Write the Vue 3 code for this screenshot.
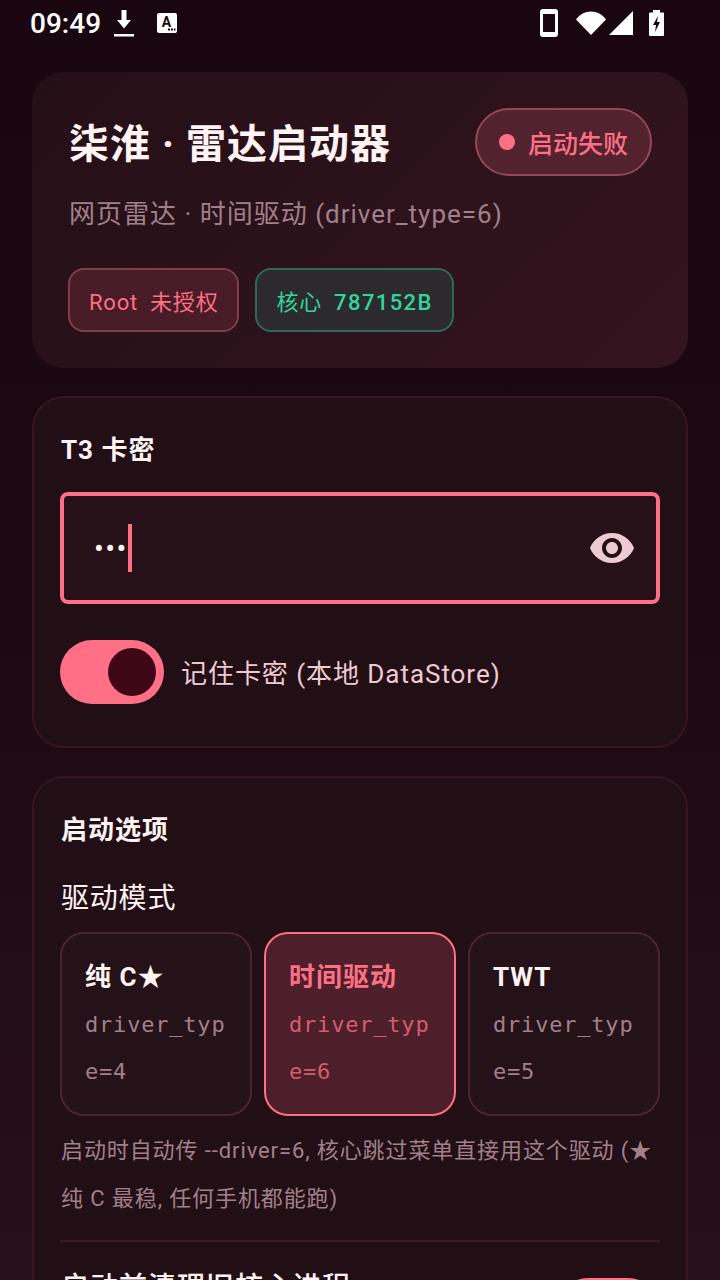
<script setup>
const drivers = [
  { name: '纯 C★', code: 'driver_type=4', active: false },
  { name: '时间驱动', code: 'driver_type=6', active: true },
  { name: 'TWT', code: 'driver_type=5', active: false },
]
</script>

<template>
  <div class="screen">
    <div class="status-bar">
      <span class="clock">09:49</span>
      <svg class="ic-download" width="22" height="28" viewBox="0 0 22 28">
        <path d="M8.500 1h5v10h4.500L11 19.500 4 11h4.500z" fill="#fff" />
        <rect x="1" y="25" width="20" height="2.500" fill="#fff" />
      </svg>
      <svg class="ic-sim" width="20" height="20" viewBox="0 0 20 20">
        <rect width="20" height="20" rx="2" fill="#fff" />
        <text x="9.500" y="13.500" text-anchor="middle" class="sim-letter">A</text>
        <rect x="11" y="15.500" width="2" height="2" fill="#1a0610" />
        <rect x="14" y="15.500" width="2" height="2" fill="#1a0610" />
        <rect x="17" y="15.500" width="1.500" height="2" fill="#1a0610" />
      </svg>
      <div class="status-right">
        <svg class="ic-phone" width="18" height="28" viewBox="0 0 18 28">
          <path fill-rule="evenodd" d="M3 0h12a3 3 0 0 1 3 3v22a3 3 0 0 1-3 3H3a3 3 0 0 1-3-3V3a3 3 0 0 1 3-3zM3 5v18h12V5z" fill="#fff" />
        </svg>
        <svg class="ic-wifi" width="30" height="24" viewBox="0 0 30 24">
          <path d="M0 8.500C3.800 3.200 9 .5 15 .5s11.200 2.700 15 8L15 24z" fill="#fff" />
        </svg>
        <svg class="ic-signal" width="24" height="24" viewBox="0 0 24 24">
          <path d="M24 0v24H0z" fill="#fff" />
        </svg>
        <svg class="ic-battery" width="15" height="26" viewBox="0 0 15 26">
          <path d="M4 0h7v2.500h3a1 1 0 0 1 1 1V25a1 1 0 0 1-1 1H1a1 1 0 0 1-1-1V3.500a1 1 0 0 1 1-1h3z" fill="#fff" />
          <path d="M9 6 4 15h3l-1 7 5-10H8z" fill="#1a0610" />
        </svg>
      </div>
    </div>

    <div class="content">
      <section class="hero">
        <div class="hero-top">
          <h1 class="hero-title">柒淮 · 雷达启动器</h1>
          <div class="state-badge">
            <span class="state-dot"></span>
            <span>启动失败</span>
          </div>
        </div>
        <p class="hero-sub">网页雷达 · 时间驱动 (driver_type=6)</p>
        <div class="chips">
          <div class="chip chip-red"><span>Root<span class="chip-val">未授权</span></span></div>
          <div class="chip chip-green"><span>核心<span class="chip-val chip-num">787152B</span></span></div>
        </div>
      </section>

      <section class="card card-key">
        <h2 class="card-title">T3 卡密</h2>
        <div class="key-input">
          <span class="dots">•••</span>
          <span class="caret"></span>
          <svg class="eye" width="48" height="48" viewBox="0 0 24 24">
            <path d="M12 4.500C7 4.500 2.730 7.610 1 12c1.730 4.390 6 7.500 11 7.500s9.270-3.110 11-7.500c-1.730-4.390-6-7.500-11-7.500zM12 17c-2.760 0-5-2.240-5-5s2.240-5 5-5 5 2.240 5 5-2.240 5-5 5zm0-8c-1.660 0-3 1.340-3 3s1.340 3 3 3 3-1.340 3-3-1.340-3-3-3z" fill="#eecbd2" />
          </svg>
        </div>
        <div class="remember">
          <div class="switch"><span class="thumb"></span></div>
          <span class="remember-label">记住卡密 (本地 DataStore)</span>
        </div>
      </section>

      <section class="card">
        <h2 class="card-title">启动选项</h2>
        <div class="mode-label">驱动模式</div>
        <div class="drivers">
          <div v-for="d in drivers" :key="d.code" class="driver" :class="{ active: d.active }">
            <div class="driver-name">{{ d.name }}</div>
            <div class="driver-code">{{ d.code }}</div>
          </div>
        </div>
        <p class="hint">启动时自动传 --driver=6, 核心跳过菜单直接用这个驱动 (★纯 C 最稳, 任何手机都能跑)</p>
        <div class="divider"></div>
        <div class="clean-row">
          <span class="clean-label">启动前清理旧核心进程</span>
          <div class="switch"><span class="thumb"></span></div>
        </div>
      </section>
    </div>
  </div>
</template>

<style>
html,
body {
  margin: 0;
  background: #1a0610;
}
</style>

<style scoped>
.screen {
  width: 720px;
  height: 1280px;
  overflow: hidden;
  background: linear-gradient(180deg, #19060f 0%, #1b0811 40%, #28101a 100%);
  font-family: Roboto, 'Noto Sans CJK SC', sans-serif;
  color: #fff3f4;
}

.status-bar {
  height: 48px;
  display: flex;
  align-items: center;
  padding: 0 56px 2px 30px;
  box-sizing: border-box;
}
.clock {
  font-size: 28px;
  font-weight: 500;
  color: #fff;
  width: 70px;
}
.ic-download {
  margin-left: 13px;
}
.ic-sim {
  margin-left: 22px;
}
.sim-letter {
  font-size: 14px;
  font-weight: 700;
  fill: #1a0610;
}
.status-right {
  margin-left: auto;
  display: flex;
  align-items: center;
}
.ic-wifi {
  margin-left: 18px;
}
.ic-signal {
  margin-left: 3px;
}
.ic-battery {
  margin-left: 16px;
}

.content {
  padding: 24px 32px 0;
  display: flex;
  flex-direction: column;
  gap: 28px;
}

.hero {
  padding: 36px;
  border-radius: 32px;
  background: linear-gradient(135deg, #250f16 0%, #33141f 100%);
}
.hero-top {
  display: flex;
  align-items: center;
  justify-content: space-between;
}
.hero-title {
  margin: 0;
  padding: 6px 0 0 1px;
  font-size: 40px;
  font-weight: 700;
  line-height: 62px;
  letter-spacing: 1px;
}
.state-badge {
  width: 177px;
  height: 68px;
  box-sizing: border-box;
  padding-left: 22px;
  display: flex;
  align-items: center;
  gap: 13px;
  border: 2px solid #96465a;
  border-radius: 34px;
  background: #52222f;
  color: #ff6f85;
  font-size: 25px;
  font-weight: 500;
}
.state-dot {
  width: 16px;
  height: 16px;
  border-radius: 50%;
  background: #ff6f85;
}
.hero-sub {
  margin: 20px 0 0;
  padding-left: 1px;
  font-size: 26px;
  line-height: 36px;
  letter-spacing: 1px;
  color: #a0808a;
}
.chips {
  display: flex;
  gap: 16px;
  margin-top: 36px;
}
.chip {
  height: 64px;
  box-sizing: border-box;
  padding: 0 19px;
  display: flex;
  align-items: center;
  border: 2px solid;
  border-radius: 16px;
  font-size: 22px;
  letter-spacing: 0.8px;
}
.chip-val {
  margin-left: 12px;
}
.chip-num {
  font-weight: 500;
  letter-spacing: 1.4px;
}
.chip-red {
  border-color: #7f3c4b;
  background: #471c27;
  color: #ff6f85;
}
.chip-green {
  border-color: #2c6a58;
  background: #2d2a2d;
  color: #2fd69c;
}

.card {
  padding: 35px 26px 42px;
  border: 2px solid #361520;
  border-radius: 32px;
  background: #220f16;
}
.card-title {
  margin: 0;
  font-size: 26px;
  font-weight: 700;
  line-height: 34px;
  letter-spacing: 1px;
  padding-left: 1px;
}

.key-input {
  height: 112px;
  margin-top: 25px;
  box-sizing: border-box;
  padding: 0 20px 0 30px;
  display: flex;
  align-items: center;
  border: 4px solid #ff6f85;
  border-radius: 8px;
  background: #261118;
}
.dots {
  margin-top: 2px;
  font-size: 29px;
  letter-spacing: 1.5px;
  color: #fff3f4;
}
.caret {
  width: 4px;
  height: 48px;
  background: #ff6f85;
}
.eye {
  margin-left: auto;
}

.remember {
  margin-top: 36px;
  display: flex;
  align-items: center;
  gap: 18px;
}
.switch {
  width: 104px;
  height: 64px;
  box-sizing: border-box;
  padding: 8px;
  display: flex;
  justify-content: flex-end;
  border-radius: 32px;
  background: #ff6f85;
  flex: none;
}
.thumb {
  width: 48px;
  height: 48px;
  border-radius: 50%;
  background: #3d0716;
}
.remember-label {
  margin: 0 0 2px -1px;
  font-size: 26px;
  letter-spacing: 0.95px;
  color: #eecbd2;
}

.mode-label {
  margin-top: 33px;
  padding-left: 1px;
  font-size: 28px;
  line-height: 38px;
  letter-spacing: 0.8px;
}
.drivers {
  display: grid;
  grid-template-columns: repeat(3, 192px);
  gap: 12px;
  margin-top: 14px;
}
.driver {
  height: 184px;
  box-sizing: border-box;
  padding: 25px 22px 0 23px;
  border: 2px solid #4a2430;
  border-radius: 24px;
  background: #251118;
}
.driver-name {
  font-size: 26px;
  font-weight: 700;
  line-height: 36px;
  letter-spacing: 1px;
  margin-bottom: 6px;
}
.driver-code {
  font-family: 'DejaVu Sans Mono', monospace;
  font-size: 22px;
  letter-spacing: 0.8px;
  line-height: 47px;
  color: #a0808a;
  word-break: break-all;
}
.driver.active {
  border-color: #ff6f85;
  background: #4c1f2b;
}
.driver.active .driver-name {
  color: #ff6f85;
}
.driver.active .driver-code {
  color: #d95a70;
}

.hint {
  margin: 11px 0 0;
  padding-left: 1px;
  font-size: 22px;
  letter-spacing: 0.9px;
  line-height: 48px;
  color: #a0808a;
}
.divider {
  height: 2px;
  margin-top: 17px;
  background: #3a1722;
}
.clean-row {
  display: flex;
  justify-content: space-between;
  align-items: flex-start;
  padding-top: 36px;
}
.clean-label {
  margin-top: -10px;
  font-size: 28px;
  font-weight: 500;
  line-height: 40px;
  letter-spacing: 1px;
  padding-left: 1px;
}
</style>
